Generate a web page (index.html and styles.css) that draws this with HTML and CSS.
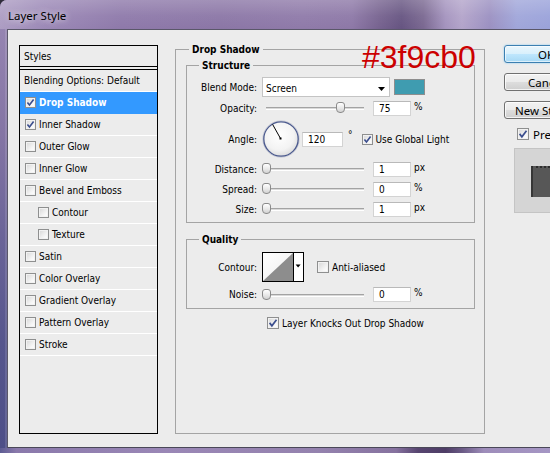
FILE: index.html
```html
<!DOCTYPE html>
<html lang="en">
<head>
<meta charset="utf-8">
<title>Layer Style</title>
<link rel="stylesheet" href="styles.css">
</head>
<body>
<div class="window">
  <div class="titlebar"><span class="title">Layer Style</span></div>
  <div class="middle">
    <div class="left-edge"></div>
    <div class="client ui">
      <div class="styles-panel">
        <div class="panel-head">Styles</div>
        <div class="srow plain">Blending Options: Default</div>
        <div class="srow selected"><span class="cb on"><svg viewBox="0 0 9 9" width="9" height="9"><path d="M1.4 4.4 3.5 7 7.6 1.5" fill="none" stroke="#3b4e8e" stroke-width="1.6"/></svg></span><span>Drop Shadow</span></div>
        <div class="srow"><span class="cb on"><svg viewBox="0 0 9 9" width="9" height="9"><path d="M1.4 4.4 3.5 7 7.6 1.5" fill="none" stroke="#3b4e8e" stroke-width="1.6"/></svg></span><span>Inner Shadow</span></div>
        <div class="srow"><span class="cb"></span><span>Outer Glow</span></div>
        <div class="srow"><span class="cb"></span><span>Inner Glow</span></div>
        <div class="srow"><span class="cb"></span><span>Bevel and Emboss</span></div>
        <div class="srow indent"><span class="cb"></span><span>Contour</span></div>
        <div class="srow indent"><span class="cb"></span><span>Texture</span></div>
        <div class="srow"><span class="cb"></span><span>Satin</span></div>
        <div class="srow"><span class="cb"></span><span>Color Overlay</span></div>
        <div class="srow"><span class="cb"></span><span>Gradient Overlay</span></div>
        <div class="srow"><span class="cb"></span><span>Pattern Overlay</span></div>
        <div class="srow"><span class="cb"></span><span>Stroke</span></div>
      </div>

      <fieldset class="group outer">
        <legend>Drop Shadow</legend>

        <fieldset class="group inner-group structure">
          <legend>Structure</legend>

          <div class="frow h20">
            <span class="lbl">Blend Mode:</span>
            <div class="select"><span class="sel-text">Screen</span><svg width="7" height="4" viewBox="0 0 7 4"><polygon points="0,0 7,0 3.5,4" fill="#000"/></svg></div>
            <span class="swatch"></span>
          </div>

          <div class="frow h22">
            <span class="lbl">Opacity:</span>
            <div class="slider"><span class="thumb" style="--v:0.75"></span></div>
            <span class="field">75</span><span class="unit">%</span>
          </div>

          <div class="frow h40">
            <span class="lbl">Angle:</span>
            <svg class="dial" width="38" height="38" viewBox="0 0 38 38">
              <defs>
                <radialGradient id="dialfill" cx="45%" cy="40%" r="60%">
                  <stop offset="0" stop-color="#ffffff"/>
                  <stop offset="0.7" stop-color="#f3f3f3"/>
                  <stop offset="1" stop-color="#dedede"/>
                </radialGradient>
              </defs>
              <circle cx="19" cy="19" r="18.2" fill="none" stroke="#c9cbd6" stroke-width="1"/>
              <circle cx="19" cy="19" r="17.2" fill="url(#dialfill)" stroke="#4b5a8e" stroke-width="1.3"/>
              <line x1="18.5" y1="18.5" x2="10.6" y2="4.4" stroke="#000" stroke-width="1"/>
              <rect x="17.5" y="17.5" width="2" height="2" fill="#000"/>
            </svg>
            <span class="field wide">120</span>
            <span class="deg">°</span>
            <span class="cb gl on"><svg viewBox="0 0 9 9" width="9" height="9"><path d="M1.4 4.4 3.5 7 7.6 1.5" fill="none" stroke="#3b4e8e" stroke-width="1.6"/></svg></span>
            <span class="cblabel">Use Global Light</span>
          </div>

          <div class="frow h20">
            <span class="lbl">Distance:</span>
            <div class="slider"><span class="thumb" style="--v:0"></span></div>
            <span class="field">1</span><span class="unit">px</span>
          </div>

          <div class="frow h20">
            <span class="lbl">Spread:</span>
            <div class="slider"><span class="thumb" style="--v:0"></span></div>
            <span class="field">0</span><span class="unit">%</span>
          </div>

          <div class="frow h20">
            <span class="lbl">Size:</span>
            <div class="slider"><span class="thumb" style="--v:0"></span></div>
            <span class="field">1</span><span class="unit">px</span>
          </div>
        </fieldset>

        <fieldset class="group inner-group quality">
          <legend>Quality</legend>

          <div class="frow h30">
            <span class="lbl">Contour:</span>
            <svg class="contour" width="42" height="30" viewBox="0 0 42 30">
              <defs>
                <linearGradient id="cwhite" x1="0" y1="0" x2="1" y2="1">
                  <stop offset="0" stop-color="#ffffff"/>
                  <stop offset="1" stop-color="#ededed"/>
                </linearGradient>
              </defs>
              <rect x="0.5" y="0.5" width="41" height="29" fill="#fff" stroke="#000"/>
              <rect x="1" y="1" width="30" height="28" fill="url(#cwhite)"/>
              <polygon points="1,29 31,1 31,29" fill="#8d8d8d"/>
              <line x1="31.5" y1="0" x2="31.5" y2="30" stroke="#000" stroke-width="1"/>
              <polygon points="33.6,12.5 38.6,12.5 36.1,15.5" fill="#000"/>
            </svg>
            <span class="cb big aa"></span>
            <span class="cblabel">Anti-aliased</span>
          </div>

          <div class="frow h21 noise">
            <span class="lbl">Noise:</span>
            <div class="slider"><span class="thumb" style="--v:0"></span></div>
            <span class="field">0</span><span class="unit">%</span>
          </div>
        </fieldset>

        <div class="knock"><span class="cb big on"><svg viewBox="0 0 10 10" width="10" height="10"><path d="M1.6 4.9 3.9 7.8 8.5 1.7" fill="none" stroke="#3b4e8e" stroke-width="1.7"/></svg></span><span class="cblabel">Layer Knocks Out Drop Shadow</span></div>
      </fieldset>

      <div class="side">
        <div class="btn default">OK</div>
        <div class="btn">Cancel</div>
        <div class="btn">New Style...</div>
        <div class="pcheck"><span class="cb big on"><svg viewBox="0 0 10 10" width="10" height="10"><path d="M1.6 4.9 3.9 7.8 8.5 1.7" fill="none" stroke="#3b4e8e" stroke-width="1.7"/></svg></span><span class="cblabel">Preview</span></div>
        <div class="pbox"><div class="pswatch"></div></div>
      </div>
    </div>
  </div>
  <div class="bottom-edge"></div>
</div>
<div class="annot">#3f9cb0</div>
</body>
</html>
```
FILE: styles.css
```css
html, body {
  margin: 0;
  padding: 0;
}

body {
  width: 550px;
  height: 453px;
  overflow: hidden;
  background: #2f2d3a;
}

.window {
  width: 550px;
  height: 453px;
  display: flex;
  flex-direction: column;
  border-top-left-radius: 7px;
  overflow: hidden;
  background: #8f7cab;
}

.titlebar {
  height: 29px;
  flex: none;
  box-sizing: border-box;
  display: flex;
  align-items: center;
  padding: 2px 0 0 8px;
  background:
    linear-gradient(180deg, rgba(255,255,255,0.2), rgba(255,255,255,0.05) 55%, rgba(255,255,255,0)),
    linear-gradient(90deg, #ad9dc3 0%, #9c89b7 8%, #8e79aa 22%, #8b76a6 40%, #8f7aa9 55%, #8d78a7 64%, #76628f 69%, #665481 73%, #7a6891 77%, #a493be 81%, #b3a4ca 84%, #9b90c1 89%, #a0a6da 94%, #9aa2da 100%);
}

.title {
  font-family: "Noto Sans", "Liberation Sans", sans-serif;
  font-size: 11.5px;
  color: #000;
  text-shadow: 0 0 6px rgba(255,255,255,0.7), 0 0 10px rgba(255,255,255,0.45);
}

.middle {
  flex: 1;
  min-height: 0;
  display: flex;
}

.left-edge {
  width: 7px;
  flex: none;
  background: linear-gradient(180deg, #9584b1 0%, #8475a4 25%, #6a6498 50%, #56568d 75%, #4e4f88 100%);
  box-shadow: inset -2px 0 0 rgba(255,255,255,0.12);
}

.bottom-edge {
  height: 5px;
  flex: none;
  background: linear-gradient(90deg, #5d5c93 0%, #8a79ab 3%, #9a87b6 30%, #9482ae 58%, #86729f 72%, #574570 76%, #4e3d66 81%, #6a5a85 84%, #9e8dba 88%, #a596c4 100%);
}

.client {
  flex: 1;
  min-width: 0;
  display: flex;
  align-items: stretch;
  background: #ececec;
  border-top: 1px solid #5a5769;
  border-left: 1px solid #5a5769;
  border-bottom: 1px solid #4a4858;
  padding: 12px 0 13px 11px;
  overflow: hidden;
}

.ui {
  font-family: "DejaVu Sans Condensed", "DejaVu Sans", sans-serif;
  font-stretch: condensed;
  font-size: 10px;
  color: #000;
}

/* ---------- Styles list ---------- */
.styles-panel {
  flex: none;
  width: 139px;
  box-sizing: border-box;
  margin: 3px 17px 0 0;
  border: 1px solid #000;
  overflow: hidden;
}

.panel-head {
  height: 24px;
  box-sizing: border-box;
  border-bottom: 4px double #000;
  padding-left: 4px;
  display: flex;
  align-items: center;
}

.srow {
  height: 22px;
  box-sizing: border-box;
  border-bottom: 1px solid #fff;
  display: flex;
  align-items: center;
  padding-left: 5px;
  white-space: nowrap;
}

.srow .cb {
  margin-right: 3px;
}

.srow.plain {
  padding-left: 4px;
}

.srow.indent {
  padding-left: 18px;
}

.srow.selected {
  background: #3399ff;
  border-bottom-color: #3399ff;
  color: #fff;
  font-weight: bold;
}

/* ---------- checkbox ---------- */
.cb {
  width: 11px;
  height: 11px;
  box-sizing: border-box;
  flex: none;
  display: inline-flex;
  align-items: center;
  justify-content: center;
  border: 1px solid #8e8f8f;
  background: linear-gradient(135deg, #d6d6d6, #f7f7f7 70%, #ffffff);
  box-shadow: inset 0 0 0 1px #f2f2f2;
}

.cb svg {
  display: block;
}

.cb.big {
  width: 12px;
  height: 12px;
}

.cblabel {
  white-space: nowrap;
  margin-left: 3px;
}

/* ---------- group boxes ---------- */
.group {
  margin: 0;
  min-width: 0;
  box-sizing: border-box;
  border: 1px solid #a4a4a4;
}

.group > legend {
  font-weight: bold;
  line-height: 15px;
  padding: 0 3px;
}

.outer {
  flex: none;
  width: 310px;
  padding: 1px 9px 0 10px;
}

.outer > legend {
  margin-left: 3px;
}

.inner-group {
  width: 289px;
  padding: 4px 0 3px 10px;
}

.inner-group > legend {
  margin-left: 2px;
}

.quality {
  margin-top: 9px;
  padding-top: 5px;
}

/* ---------- form rows ---------- */
.frow {
  display: flex;
  align-items: center;
  white-space: nowrap;
}

.h20 { height: 20px; }
.h21 { height: 21px; }
.h22 { height: 22px; }
.h30 { height: 30px; }
.h40 { height: 40px; }

.noise {
  margin-top: 2px;
}

.lbl {
  width: 60px;
  flex: none;
  text-align: right;
  margin-right: 5px;
}

.select {
  width: 128px;
  height: 20px;
  flex: none;
  box-sizing: border-box;
  display: flex;
  align-items: center;
  justify-content: space-between;
  padding: 2px 4px 0 3px;
  background: #fff;
  border: 1px solid #c4c4c4;
}

.select svg {
  display: block;
  margin-top: 1px;
}

.swatch {
  width: 31px;
  height: 16px;
  flex: none;
  box-sizing: border-box;
  margin-left: 4px;
  border: 1px solid #8e8e8e;
  background: #3f9cb0;
}

.slider {
  position: relative;
  width: 108px;
  height: 12px;
  flex: none;
}

.slider::before {
  content: "";
  position: absolute;
  left: 4px;
  right: 6px;
  top: 5px;
  height: 3px;
  box-sizing: border-box;
  border-top: 1px solid #a3a3a3;
  border-bottom: 1px solid #ffffff;
  background: #d9d9d9;
}

.thumb {
  position: absolute;
  top: 0;
  left: calc((100% - 9px) * var(--v, 0));
  width: 9px;
  height: 11px;
  box-sizing: border-box;
  border: 1px solid #8a8a8a;
  border-radius: 3px 3px 4px 4px;
  background: linear-gradient(180deg, #ffffff, #e6e6e6 60%, #d2d2d2);
}

.field {
  width: 38px;
  height: 15px;
  flex: none;
  box-sizing: border-box;
  margin-left: 3px;
  padding-left: 5px;
  line-height: 13px;
  background: #fff;
  border: 1px solid #d3d3d3;
  border-top-color: #b9b9b9;
}

.field.wide {
  width: 41px;
  margin-left: 2px;
}

.unit {
  margin-left: 3px;
  margin-bottom: 4px;
}

.dial {
  flex: none;
  display: block;
}

.deg {
  margin-left: 5px;
  margin-bottom: 9px;
}

.cb.gl {
  margin-left: 9px;
}

.contour {
  flex: none;
  display: block;
}

.cb.aa {
  margin-left: 13px;
}

.knock {
  display: flex;
  align-items: center;
  height: 14px;
  margin: 7px 0 0 81px;
  white-space: nowrap;
}

/* ---------- right column ---------- */
.side {
  flex: none;
  width: 84px;
  margin-left: 19px;
  display: flex;
  flex-direction: column;
  align-items: flex-start;
}

.btn {
  width: 84px;
  height: 18px;
  flex: none;
  box-sizing: border-box;
  margin-top: 10px;
  display: flex;
  align-items: center;
  justify-content: center;
  font-family: "Noto Sans", "Liberation Sans", sans-serif;
  font-size: 11.5px;
  color: #000;
  border: 1px solid #707070;
  border-radius: 3px;
  background: linear-gradient(180deg, #f2f2f2 0%, #ebebeb 48%, #dddddd 52%, #cfcfcf 100%);
  box-shadow: inset 0 0 0 1px rgba(255,255,255,0.75);
}

.btn.default {
  margin-top: 3px;
  border-color: #3c7fb1;
  background: linear-gradient(180deg, #eaf6fd 0%, #d9f0fc 48%, #bee6fd 52%, #a7d9f5 100%);
  box-shadow: inset 0 0 0 1px rgba(255,255,255,0.6), 0 0 2px #7fc4ee;
}

.pcheck {
  display: flex;
  align-items: center;
  height: 12px;
  margin: 9px 0 0 13px;
  font-family: "Noto Sans", "Liberation Sans", sans-serif;
  font-size: 11.5px;
}

.pcheck .cblabel {
  margin-left: 4px;
}

.pbox {
  width: 74px;
  height: 65px;
  flex: none;
  box-sizing: border-box;
  margin: 8px 0 0 10px;
  padding: 17px 0 0 16px;
  border: 1px solid #c4c4c4;
  background: #d5d5d5;
}

.pswatch {
  width: 31px;
  height: 31px;
  box-sizing: border-box;
  background: #575757;
  border-top: 2px dotted #2c2c2c;
  border-left: 2px solid #363636;
}

/* ---------- annotation overlay ---------- */
.annot {
  position: absolute;
  left: 362px;
  top: 41px;
  font-family: "Liberation Sans", Arial, sans-serif;
  font-size: 32px;
  line-height: 1;
  color: #cc0000;
}
```
